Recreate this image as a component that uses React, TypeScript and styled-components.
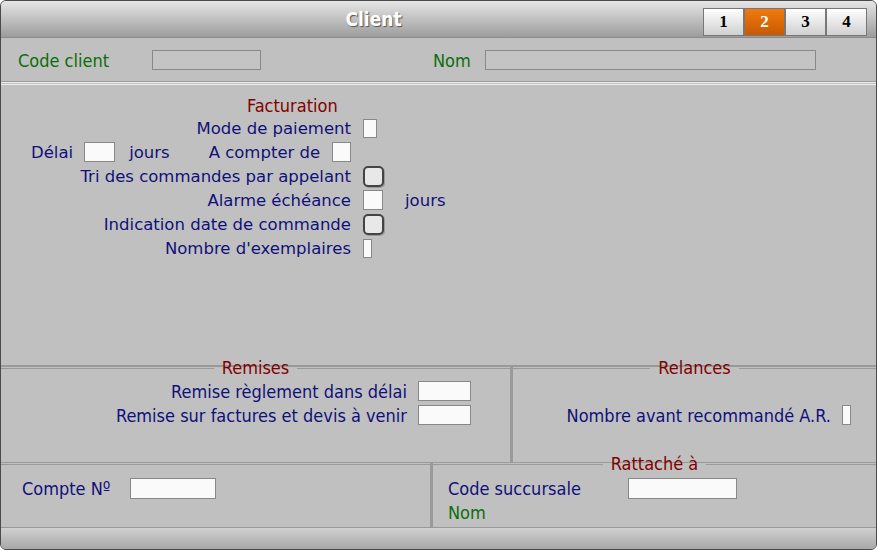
import React from 'react'
import styled, { createGlobalStyle } from 'styled-components'

const Global = createGlobalStyle`
  body { margin: 0; background: #fff; }
`

const Window = styled.div`
  width: 875px;
  height: 548px;
  border: 1px solid #4a4a4a;
  border-radius: 6px;
  overflow: hidden;
  background: #c0c0c0;
  display: flex;
  flex-direction: column;
  font-family: 'DejaVu Sans Condensed', 'DejaVu Sans', sans-serif;
`

const TitleBar = styled.div`
  height: 36px;
  position: relative;
  display: flex;
  align-items: center;
  justify-content: center;
  background: linear-gradient(#e6e6e6, #9c9c9c);
  border-bottom: 1px solid #8a8a8a;
`

const Title = styled.div`
  color: #fff;
  font-weight: bold;
  font-size: 19px;
  text-shadow: 1px 1px 1px #555;
  margin-right: 130px;
`

const Tabs = styled.div`
  position: absolute;
  right: 9px;
  top: 7px;
  display: flex;
`

const Tab = styled.div<{ active?: boolean }>`
  width: 39px;
  height: 26px;
  display: flex;
  align-items: center;
  justify-content: center;
  font-family: 'Liberation Serif', serif;
  font-weight: bold;
  font-size: 17px;
  color: ${({ active }) => (active ? '#fff' : '#000')};
  background: ${({ active }) => (active ? 'linear-gradient(#f07a10, #c85a00)' : 'linear-gradient(#ffffff, #d0d0d0)')};
  border: 1px solid #777;
`

const HeaderRow = styled.div`
  height: 44px;
  display: flex;
  align-items: center;
  padding-left: 17px;
  border-bottom: 3px double #eee;
  box-shadow: 0 -1px 0 #9a9a9a inset;
`

const GreenLabel = styled.span<{ w?: number }>`
  color: #0a6e0a;
  width: ${({ w }) => (w ? w + 'px' : 'auto')};
  font-size: 18px;
`

const Input = styled.div<{ w: number; h?: number; white?: boolean }>`
  width: ${({ w }) => w}px;
  height: ${({ h }) => h || 19}px;
  box-sizing: border-box;
  border: 1px solid #888;
  background: ${({ white }) => (white ? '#fafafa' : '#c4c4c4')};
  flex: none;
`

const Facturation = styled.div`
  height: 282px;
  padding-top: 10px;
  box-sizing: border-box;
  border-bottom: 2px solid #999;
  font-family: 'DejaVu Sans', Verdana, sans-serif;
  font-size: 16.5px;
  color: #10107a;
`

const SectionTitle = styled.div`
  color: #800000;
  font-family: 'DejaVu Sans Condensed', sans-serif;
  font-size: 18px;
  padding-left: 246px;
  height: 21px;
`

const FRow = styled.div`
  height: 24px;
  display: grid;
  grid-template-columns: 350px auto 1fr;
  justify-items: start;
  align-items: center;
  column-gap: 12px;
  & > span:first-child {
    justify-self: end;
  }
`

const FreeRow = styled.div`
  height: 24px;
  display: flex;
  align-items: center;
  padding-left: 30px;
`

const Check = styled.div`
  width: 21px;
  height: 21px;
  box-sizing: border-box;
  border: 2px solid #444;
  border-radius: 5px;
  background: #e8e8e8;
  box-shadow: 1px 1px 0 #999;
`

const Grid = styled.div`
  display: grid;
`

const GroupRow = styled.div<{ h: number; cols: string }>`
  display: grid;
  grid-template-columns: ${({ cols }) => cols};
  height: ${({ h }) => h}px;
  border-bottom: 1px solid #999;
`

const Group = styled.div<{ divider?: boolean }>`
  border-right: ${({ divider }) => (divider ? '3px solid #9a9a9a' : 'none')};
  color: #10107a;
  font-size: 18px;
`

const GroupHead = styled.div`
  height: 0;
  display: flex;
  align-items: center;
  &::before,
  &::after {
    content: '';
    flex: 1;
    border-top: 3px double #9a9a9a;
  }
`

const GroupTitle = styled.span`
  color: #800000;
  padding: 0 8px;
`

const RemRow = styled.div<{ pr?: number }>`
  display: flex;
  align-items: center;
  justify-content: flex-end;
  gap: 11px;
  height: 24px;
  padding-right: ${({ pr }) => pr ?? 39}px;
`

const Footer = styled.div`
  flex: 1;
  background: linear-gradient(#d0d0d0, #a8a8a8);
`

const Spacer = styled.span<{ w: number }>`
  width: ${({ w }) => w}px;
  flex: none;
`

const BottomLine = styled.div<{ pt?: number }>`
  display: flex;
  align-items: center;
  height: 24px;
  padding-left: 15px;
  padding-top: ${({ pt }) => pt || 0}px;
`

const GroupBody = styled.div<{ pt: number }>`
  padding-top: ${({ pt }) => pt}px;
`

export default function App() {
  return (
    <Window>
      <Global />
      <TitleBar>
        <Title>Client</Title>
        <Tabs>
          <Tab>1</Tab>
          <Tab active>2</Tab>
          <Tab>3</Tab>
          <Tab>4</Tab>
        </Tabs>
      </TitleBar>
      <HeaderRow>
        <GreenLabel w={134}>Code client</GreenLabel>
        <Input w={109} h={20} />
        <Spacer w={172} />
        <GreenLabel w={52}>Nom</GreenLabel>
        <Input w={331} h={20} />
      </HeaderRow>
      <Facturation>
        <SectionTitle>Facturation</SectionTitle>
        <FRow>
          <span>Mode de paiement</span>
          <Input w={14} white />
        </FRow>
        <FreeRow>
          <span>Délai</span>
          <Spacer w={11} />
          <Input w={31} h={20} white />
          <Spacer w={14} />
          <span>jours</span>
          <Spacer w={39} />
          <span>A compter de</span>
          <Spacer w={12} />
          <Input w={19} h={20} white />
        </FreeRow>
        <FRow>
          <span>Tri des commandes par appelant</span>
          <Check />
        </FRow>
        <FRow>
          <span>Alarme échéance</span>
          <Input w={20} h={20} white />
          <span style={{ paddingLeft: 10 }}>jours</span>
        </FRow>
        <FRow>
          <span>Indication date de commande</span>
          <Check />
        </FRow>
        <FRow>
          <span>Nombre d'exemplaires</span>
          <Input w={9} white />
        </FRow>
      </Facturation>
      <Grid>
        <GroupRow h={95} cols="512px 1fr">
          <Group divider>
            <GroupHead>
              <GroupTitle>Remises</GroupTitle>
            </GroupHead>
            <GroupBody pt={12}>
              <RemRow>
                <span>Remise règlement dans délai</span>
                <Input w={53} h={20} white />
              </RemRow>
              <RemRow>
                <span>Remise sur factures et devis à venir</span>
                <Input w={53} h={20} white />
              </RemRow>
            </GroupBody>
          </Group>
          <Group>
            <GroupHead>
              <GroupTitle>Relances</GroupTitle>
            </GroupHead>
            <GroupBody pt={36}>
              <RemRow pr={25}>
                <span>Nombre avant recommandé A.R.</span>
                <Input w={9} h={20} white />
              </RemRow>
            </GroupBody>
          </Group>
        </GroupRow>
        <GroupRow h={64} cols="432px 1fr">
          <Group divider>
            <GroupHead />
            <BottomLine pt={13} style={{ paddingLeft: 21 }}>
              <span style={{ width: 108 }}>Compte Nº</span>
              <Input w={86} h={21} white />
            </BottomLine>
          </Group>
          <Group>
            <GroupHead>
              <GroupTitle>Rattaché à</GroupTitle>
            </GroupHead>
            <BottomLine pt={13}>
              <span style={{ width: 180 }}>Code succursale</span>
              <Input w={109} h={21} white />
            </BottomLine>
            <BottomLine>
              <GreenLabel>Nom</GreenLabel>
            </BottomLine>
          </Group>
        </GroupRow>
      </Grid>
      <Footer />
    </Window>
  )
}
